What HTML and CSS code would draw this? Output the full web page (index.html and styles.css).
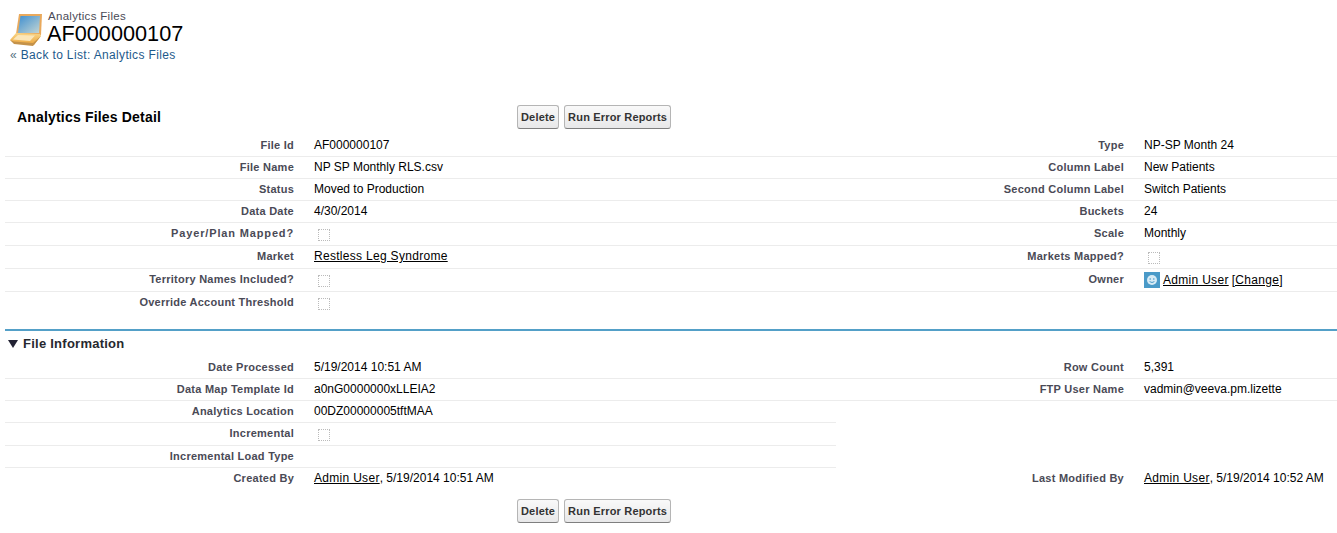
FILE: index.html
```html
<!DOCTYPE html>
<html lang="en">
<head>
<meta charset="utf-8">
<title>AF000000107</title>
<link rel="stylesheet" href="styles.css">
</head>
<body>
<header class="page-head">
  <svg class="head-icon" width="34" height="34" viewBox="0 0 34 34" aria-hidden="true">
    <defs>
      <linearGradient id="scr" x1="0" y1="0" x2="1" y2="1"><stop offset="0" stop-color="#3f8fd0"/><stop offset="1" stop-color="#c4d6d4"/></linearGradient>
      <linearGradient id="bas" x1="0" y1="0" x2="0" y2="1"><stop offset="0" stop-color="#f8d68a"/><stop offset="1" stop-color="#eda53a"/></linearGradient>
    </defs>
    <path d="M9 1 L32 1 L31 22 L24 24 L6 21 Z" fill="#e9a95c"/>
    <path d="M10.5 3 L30 3 L29 20 L8 20 Z" fill="url(#scr)"/>
    <path d="M6 20 L30 21 L31 23 L24 32 L4 30 L0 27 Z" fill="url(#bas)"/>
    <path d="M8 22 L25 22.5 L20 28 L3 26.5 Z" fill="#fbe6b8"/>
    <path d="M0 27 L4 31 L23 33 L31 23 L23 30 L4 28.5 Z" fill="#c4924a"/>
  </svg>
  <div class="head-text">
    <div class="head-type">Analytics Files</div>
    <h1 class="head-title">AF000000107</h1>
  </div>
</header>
<div class="back"><span class="back-mark">«</span> <a href="#">Back to List: Analytics Files</a></div>

<main class="detail">
  <div class="top-bar">
    <h2 class="detail-title">Analytics Files Detail</h2>
    <div class="buttons"><button class="btn">Delete</button><button class="btn">Run Error Reports</button></div>
  </div>

  <div class="row"><div class="lbl">File Id</div><div class="val">AF000000107</div><div class="lbl">Type</div><div class="val">NP-SP Month 24</div></div>
  <div class="row"><div class="lbl">File Name</div><div class="val">NP SP Monthly RLS.csv</div><div class="lbl">Column Label</div><div class="val">New Patients</div></div>
  <div class="row"><div class="lbl">Status</div><div class="val">Moved to Production</div><div class="lbl">Second Column Label</div><div class="val">Switch Patients</div></div>
  <div class="row"><div class="lbl">Data Date</div><div class="val">4/30/2014</div><div class="lbl">Buckets</div><div class="val">24</div></div>
  <div class="row tall"><div class="lbl lbl-wide">Payer/Plan Mapped?</div><div class="val"><span class="check"></span></div><div class="lbl">Scale</div><div class="val">Monthly</div></div>
  <div class="row tall"><div class="lbl">Market</div><div class="val link-cell"><a href="#">Restless Leg Syndrome</a></div><div class="lbl">Markets Mapped?</div><div class="val"><span class="check"></span></div></div>
  <div class="row tall"><div class="lbl">Territory Names Included?</div><div class="val"><span class="check"></span></div><div class="lbl">Owner</div><div class="val owner"><span class="avatar"><svg width="16" height="16" viewBox="0 0 16 16" aria-hidden="true"><rect width="16" height="16" fill="#4a9ac8"/><circle cx="8" cy="8" r="5" fill="#d8ebf5"/><circle cx="6.2" cy="7" r=".8" fill="#4a9ac8"/><circle cx="9.8" cy="7" r=".8" fill="#4a9ac8"/><path d="M5.6 9.6 Q8 11.4 10.4 9.6" stroke="#4a9ac8" fill="none"/></svg></span><a href="#">Admin User</a> <a href="#">[Change]</a></div></div>
  <div class="row tall last"><div class="lbl">Override Account Threshold</div><div class="val"><span class="check"></span></div><div class="lbl"></div><div class="val"></div></div>

  <div class="section-head">
    <svg class="twist" width="11" height="9" viewBox="0 0 11 9" aria-hidden="true"><path d="M0 0 H10 L5 8 Z" fill="#222233"/></svg>
    <h3 class="section-title">File Information</h3>
  </div>

  <div class="row"><div class="lbl">Date Processed</div><div class="val">5/19/2014 10:51 AM</div><div class="lbl">Row Count</div><div class="val">5,391</div></div>
  <div class="row"><div class="lbl">Data Map Template Id</div><div class="val">a0nG0000000xLLEIA2</div><div class="lbl">FTP User Name</div><div class="val">vadmin@veeva.pm.lizette</div></div>
  <div class="row half"><div class="lbl">Analytics Location</div><div class="val">00DZ00000005tftMAA</div></div>
  <div class="row half tall"><div class="lbl">Incremental</div><div class="val"><span class="check"></span></div></div>
  <div class="row half"><div class="lbl">Incremental Load Type</div><div class="val"></div></div>
  <div class="row last"><div class="lbl">Created By</div><div class="val"><a href="#">Admin User</a>, 5/19/2014 10:51 AM</div><div class="lbl">Last Modified By</div><div class="val"><a href="#">Admin User</a>, 5/19/2014 10:52 AM</div></div>

  <div class="bottom-bar"><button class="btn">Delete</button><button class="btn">Run Error Reports</button></div>
</main>
</body>
</html>
```

FILE: styles.css
```css
html, body { margin: 0; padding: 0; background: #fff; }
body { font-family: "Liberation Sans", Arial, sans-serif; font-size: 12px; color: #000; height: 533px; overflow: hidden; }
a { color: inherit; }

.page-head { display: flex; padding: 10px 0 0 10px; height: 35px; }
.head-icon { flex: none; margin-top: 3px; }
.head-text { margin-left: 3px; }
.head-type { font-size: 11.5px; font-weight: normal; color: #4a4a56; line-height: 12px; letter-spacing: .3px; margin-left: 1px; }
.head-title { margin: 0; font-size: 21.7px; font-weight: normal; line-height: 24px; }

.back { padding: 3px 0 0 10px; font-size: 12px; line-height: 14px; letter-spacing: .35px; color: #015ba7; }
.back a { text-decoration: none; color: #1e5a8c; }
.back-mark { color: #54707f; }

.detail { margin: 36px 0 0 5px; }
.top-bar { position: relative; height: 37px; display: flex; align-items: center; }
.detail-title { position: absolute; left: 12px; top: 10px; margin: 0; font-size: 14px; line-height: 18px; color: #000; letter-spacing: .18px; }
.buttons, .bottom-bar { display: flex; gap: 5px; padding-left: 512px; }
.bottom-bar { padding-top: 9px; }

.btn { height: 24px; padding: 0 3px; font-family: "Liberation Sans", Arial, sans-serif; font-size: 11px; font-weight: bold; letter-spacing: .18px; color: #333; background: linear-gradient(#f9f9f9, #e8e8e9); border: 1px solid #b5b5b5; border-bottom-color: #7f7f7f; border-radius: 3px; }

.row { display: grid; grid-template-columns: 299px 531px 299px 1fr; border-bottom: 1px solid #ececec; box-sizing: border-box; height: 22px; }
.row.tall { height: 23px; }
.row.half { width: 831px; grid-template-columns: 299px 1fr; }
.row.last { border-bottom: 0; }
.lbl { text-align: right; padding: 3px 10px 0 0; font-size: 11px; font-weight: bold; line-height: 14px; color: #4a4a56; letter-spacing: .25px; }
.lbl-wide { letter-spacing: .85px; }
.val { padding: 3px 0 0 10px; line-height: 14px; font-size: 12px; color: #000; white-space: nowrap; }
.val a { letter-spacing: .3px; }
.check { display: block; width: 10px; height: 10px; margin: 3px 0 0 4px; border: 1px dotted #bbb; }
.owner { padding-top: 3px; display: flex; align-items: flex-start; gap: 3px; }
.owner a { line-height: 17px; }
.avatar { display: block; width: 16px; height: 16px; }

.section-head { margin-top: 14px; border-top: 2px solid #54a0c8; height: 28px; display: flex; align-items: center; padding-left: 3px; box-sizing: border-box; }
.twist { flex: none; }
.section-title { margin: 0 0 0 4px; font-size: 13px; font-weight: bold; color: #27282e; line-height: 16px; letter-spacing: .25px; }
```
